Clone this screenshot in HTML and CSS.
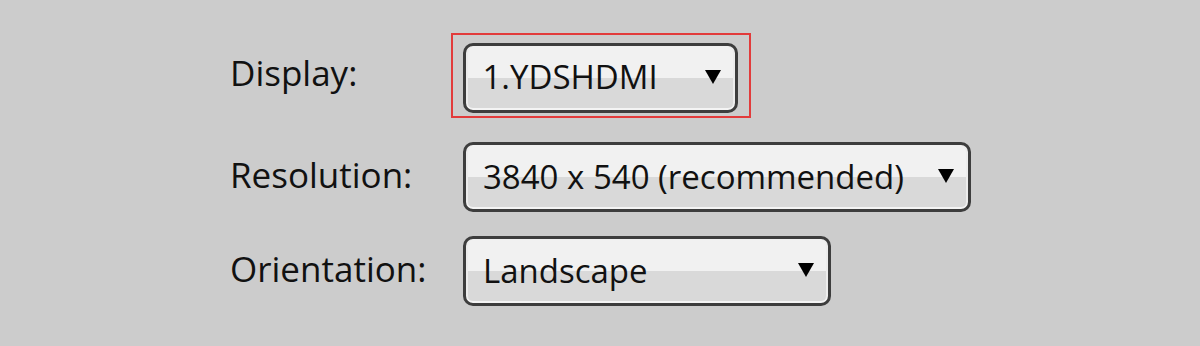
FILE: index.html
```html
<!DOCTYPE html>
<html lang="en">
<head>
    <meta charset="UTF-8">
    <title>Display Settings</title>
    <link rel="stylesheet" href="styles.css">
</head>
<body>
    <div class="settings">
        <div class="row first">
            <span class="label">Display:</span>
            <div class="highlight">
                <div class="select select-display">
                    <span class="value">1.YDSHDMI</span>
                    <span class="arrow"></span>
                </div>
            </div>
        </div>
        <div class="row">
            <span class="label">Resolution:</span>
            <div class="select select-resolution">
                <span class="value">3840 x 540 (recommended)</span>
                <span class="arrow"></span>
            </div>
        </div>
        <div class="row">
            <span class="label">Orientation:</span>
            <div class="select select-orientation">
                <span class="value">Landscape</span>
                <span class="arrow"></span>
            </div>
        </div>
    </div>
</body>
</html>
```

FILE: styles.css
```css
body {
    margin: 0;
    background-color: #cccccc;
    font-family: "Open Sans", "Noto Sans", sans-serif;
    color: #111;
    height: 346px;
    overflow: hidden;
}

.settings {
    display: flex;
    flex-direction: column;
    gap: 24px;
    padding: 33px 0 0 230px;
}

.row {
    display: grid;
    grid-template-columns: 233px auto;
    align-items: center;
}

.row.first {
    grid-template-columns: 221px auto;
}

.label {
    font-size: 35px;
    margin-top: -6px;
}

.highlight {
    border: 2.5px solid #e23b3b;
    padding: 7.5px 11.5px 3.5px 9.5px;
    width: fit-content;
}

.select {
    box-sizing: border-box;
    height: 70px;
    border: 3px solid #3d3d3d;
    border-radius: 10px;
    background: linear-gradient(#f1f1f1 0, #f1f1f1 50%, #d9d9d9 50%, #d9d9d9 100%);
    box-shadow: inset 0 -2px 0 #f4f4f4, inset 2px 0 0 #ececec, inset -2px 0 0 #ececec;
    display: flex;
    align-items: center;
    justify-content: space-between;
    padding: 0 14px 2px 17px;
    font-size: 33px;
}

.select-display {
    width: 275px;
}

.select-resolution {
    width: 508px;
}

.select-orientation {
    width: 368px;
}

.arrow {
    width: 0;
    height: 0;
    border-left: 8.5px solid transparent;
    border-right: 8.5px solid transparent;
    border-top: 14px solid #000;
}
```
